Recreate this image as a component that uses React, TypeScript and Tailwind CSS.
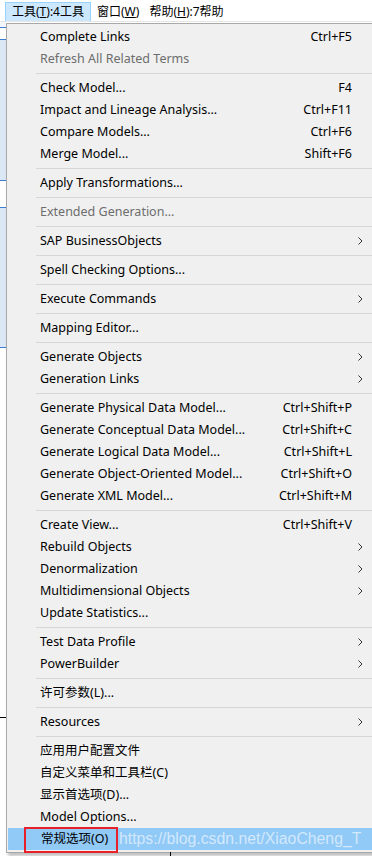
import React from 'react';

type Item =
  | { sep: true }
  | { label: string; shortcut?: string; sub?: boolean; disabled?: boolean; active?: boolean };

const items: Item[] = [
  { label: 'Complete Links', shortcut: 'Ctrl+F5' },
  { label: 'Refresh All Related Terms', disabled: true },
  { sep: true },
  { label: 'Check Model...', shortcut: 'F4' },
  { label: 'Impact and Lineage Analysis...', shortcut: 'Ctrl+F11' },
  { label: 'Compare Models...', shortcut: 'Ctrl+F6' },
  { label: 'Merge Model...', shortcut: 'Shift+F6' },
  { sep: true },
  { label: 'Apply Transformations...' },
  { sep: true },
  { label: 'Extended Generation...', disabled: true },
  { sep: true },
  { label: 'SAP BusinessObjects', sub: true },
  { sep: true },
  { label: 'Spell Checking Options...' },
  { sep: true },
  { label: 'Execute Commands', sub: true },
  { sep: true },
  { label: 'Mapping Editor...' },
  { sep: true },
  { label: 'Generate Objects', sub: true },
  { label: 'Generation Links', sub: true },
  { sep: true },
  { label: 'Generate Physical Data Model...', shortcut: 'Ctrl+Shift+P' },
  { label: 'Generate Conceptual Data Model...', shortcut: 'Ctrl+Shift+C' },
  { label: 'Generate Logical Data Model...', shortcut: 'Ctrl+Shift+L' },
  { label: 'Generate Object-Oriented Model...', shortcut: 'Ctrl+Shift+O' },
  { label: 'Generate XML Model...', shortcut: 'Ctrl+Shift+M' },
  { sep: true },
  { label: 'Create View...', shortcut: 'Ctrl+Shift+V' },
  { label: 'Rebuild Objects', sub: true },
  { label: 'Denormalization', sub: true },
  { label: 'Multidimensional Objects', sub: true },
  { label: 'Update Statistics...' },
  { sep: true },
  { label: 'Test Data Profile', sub: true },
  { label: 'PowerBuilder', sub: true },
  { sep: true },
  { label: '许可参数(L)...' },
  { sep: true },
  { label: 'Resources', sub: true },
  { sep: true },
  { label: '应用用户配置文件' },
  { label: '自定义菜单和工具栏(C)' },
  { label: '显示首选项(D)...' },
  { label: 'Model Options...' },
  { label: '常规选项(O)', active: true },
];

const Chevron = () => (
  <svg width="5" height="8" viewBox="0 0 5 8" className="absolute left-[351px] top-[7px]">
    <path d="M0.5 0.5 L4 4 L0.5 7.5" fill="none" stroke="#333" strokeWidth="1" />
  </svg>
);

const App = () => {
  return (
    <div
      className="relative w-[372px] h-[856px] overflow-hidden bg-white text-[12px] text-black"
      style={{ fontFamily: '"Noto Sans", "Noto Sans CJK SC", sans-serif' }}
    >
      {/* Menu bar */}
      <div className="flex items-end h-[22px] border-b border-[#e5e5e5] pl-[5px]">
        <div className="h-[19px] px-[6px] flex items-center bg-[#cce8ff] border border-[#99d1ff] border-b-0">
          工具(<span className="underline">T</span>):4工具
        </div>
        <div className="h-[19px] px-[6px] flex items-center">
          窗口(<span className="underline">W</span>)
        </div>
        <div className="h-[19px] px-[4px] flex items-center">
          帮助(<span className="underline">H</span>):7帮助
        </div>
      </div>

      {/* Background window strip */}
      <div className="flex flex-col w-[6px]">
        <div className="h-[6px] bg-[#f0f6fc] border-b border-[#3c7fd0]" />
        <div className="h-[12px] bg-white border-b border-[#3c7fd0]" />
        <div className="h-[140px] bg-[#dbe7f5]" />
        <div className="h-[28px] bg-white border-y border-[#3c7fd0]" />
        <div className="h-[140px] bg-[#dbe7f5] border-b border-[#3c7fd0]" />
        <div className="h-[370px] bg-white border-b border-black" />
      </div>

      {/* Dropdown menu */}
      <div className="absolute left-[6px] top-[23px] w-[370px] bg-[#f0f0f0] border border-[#a8a8a8] py-[2px] shadow-[2px_3px_3px_rgba(0,0,0,0.25)] text-[12.5px]">
        {items.map((it, i) =>
          'sep' in it ? (
            <div key={i} className="h-[7px] flex items-center pl-[29px]">
              <div className="h-px flex-1 bg-[#d7d7d7]" />
            </div>
          ) : (
            <div
              key={i}
              className={`relative h-[22px] flex items-center pl-[33px] pr-[23px] ${
                it.active ? 'bg-[#91c9f7] mx-px' : ''
              } ${it.disabled ? 'text-[#6d6d6d]' : ''}`}
            >
              <span className="flex-1 whitespace-nowrap">{it.label}</span>
              {it.shortcut && <span className="whitespace-nowrap">{it.shortcut}</span>}
              {it.sub && <Chevron />}
              {it.active && (
                <>
                  <div className="absolute left-[16px] top-[-1px] w-[94px] h-[26px] border-2 border-[#e8202a]" />
                  <span
                    className="absolute left-[111px] top-[1px] text-[15.8px] leading-[19px] text-white/60 whitespace-nowrap"
                    style={{ fontFamily: '"Liberation Sans", Arial, sans-serif' }}
                  >
                    https://blog.csdn.net/XiaoCheng_T
                  </span>
                </>
              )}
            </div>
          )
        )}
      </div>

      {/* background line below menu */}
      <div className="absolute left-[170px] top-[852px] w-px h-[4px] bg-black" />
    </div>
  );
};

export default App;
